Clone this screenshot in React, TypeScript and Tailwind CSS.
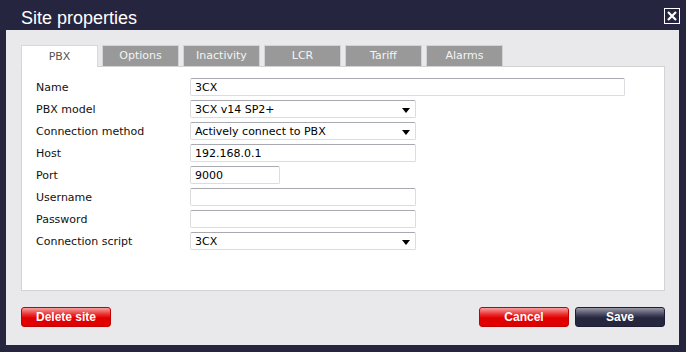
import React from "react";

const tabs = ["PBX", "Options", "Inactivity", "LCR", "Tariff", "Alarms"];

type Field = {
    label: string;
    value: string;
    width: string;
    select?: boolean;
};

const fields: Field[] = [
    { label: "Name", value: "3CX", width: "w-[435px]" },
    { label: "PBX model", value: "3CX v14 SP2+", width: "w-[226px]", select: true },
    { label: "Connection method", value: "Actively connect to PBX", width: "w-[226px]", select: true },
    { label: "Host", value: "192.168.0.1", width: "w-[226px]" },
    { label: "Port", value: "9000", width: "w-[90px]" },
    { label: "Username", value: "", width: "w-[226px]" },
    { label: "Password", value: "", width: "w-[226px]" },
    { label: "Connection script", value: "3CX", width: "w-[226px]", select: true },
];

function FieldBox({ field }: { field: Field }) {
    return (
        <div
            className={`${field.width} flex h-[18px] items-center rounded-[2px] border border-[#dcdce0] border-t-[#a9a9b1] bg-white pl-[4px] pr-[5px]`}
        >
            <span className="flex-1 text-[11px] leading-none text-black">
                {field.value}
            </span>
            {field.select ? (
                <svg width="8" height="5" viewBox="0 0 8 5" className="mt-[2px]">
                    <path d="M0 0 H8 L4 5 Z" fill="#000" />
                </svg>
            ) : null}
        </div>
    );
}

function Button({ label, tone }: { label: string; tone: "red" | "navy" }) {
    const toneClass =
        tone === "red"
            ? "border-[#c40000] bg-[linear-gradient(to_bottom,#f7a0a0_0%,#ea3030_35%,#e10000_55%,#e10000_100%)]"
            : "border-[#1d1d33] bg-[linear-gradient(to_bottom,#9a9aa8_0%,#4a4a62_35%,#26263f_55%,#26263f_100%)]";
    return (
        <button
            type="button"
            className={`${toneClass} flex h-[20px] w-[90px] items-center justify-center rounded-[3px] border font-['Liberation_Sans',Arial,sans-serif] text-[12px] font-bold text-white`}
        >
            {label}
        </button>
    );
}

export default function App() {
    return (
        <div className="flex h-[352px] w-[686px] flex-col bg-[#25253f] font-['DejaVu_Sans',Verdana,sans-serif]">
            <header className="flex h-[30px] items-center justify-between pl-[21px] pr-[6px]">
                <h1 className="pt-[5px] font-['Liberation_Sans',Arial,sans-serif] text-[18px] leading-none text-white">
                    Site properties
                </h1>
                <div className="mt-[1px] flex h-[16px] w-[16px] items-center justify-center border border-white">
                    <svg width="10" height="10" viewBox="0 0 10 10">
                        <path
                            d="M1 1 L9 9 M9 1 L1 9"
                            stroke="#fff"
                            strokeWidth="2.2"
                        />
                    </svg>
                </div>
            </header>

            <div className="mb-[7px] ml-[6px] mr-[7px] flex flex-1 flex-col bg-[#e9e9eb] px-[15px] pt-[15px]">
                <nav className="flex gap-[4px]">
                    {tabs.map((tab, index) =>
                        index === 0 ? (
                            <div
                                key={tab}
                                className="relative z-10 -mb-px flex h-[22px] w-[77px] items-center justify-center border border-b-0 border-[#d8d8dc] bg-white pt-[1px] text-[11px] text-[#555]"
                            >
                                {tab}
                            </div>
                        ) : (
                            <div
                                key={tab}
                                className="flex h-[21px] w-[77px] items-center justify-center border border-b-0 border-[#d3d3d6] bg-[#999999] pt-[1px] text-[11px] text-[#f4f4f4]"
                            >
                                {tab}
                            </div>
                        ),
                    )}
                </nav>

                <section className="flex h-[225px] w-[644px] flex-col gap-[4px] border border-[#d3d3d6] bg-white pl-[14px] pt-[11px]">
                    {fields.map((field) => (
                        <div key={field.label} className="flex h-[18px] items-center">
                            <label className="w-[154px] text-[11px] leading-none text-[#111]">
                                {field.label}
                            </label>
                            <FieldBox field={field} />
                        </div>
                    ))}
                </section>

                <footer className="mt-[16px] flex w-[644px] items-center">
                    <Button label="Delete site" tone="red" />
                    <div className="ml-auto flex gap-[6px]">
                        <Button label="Cancel" tone="red" />
                        <Button label="Save" tone="navy" />
                    </div>
                </footer>
            </div>
        </div>
    );
}
